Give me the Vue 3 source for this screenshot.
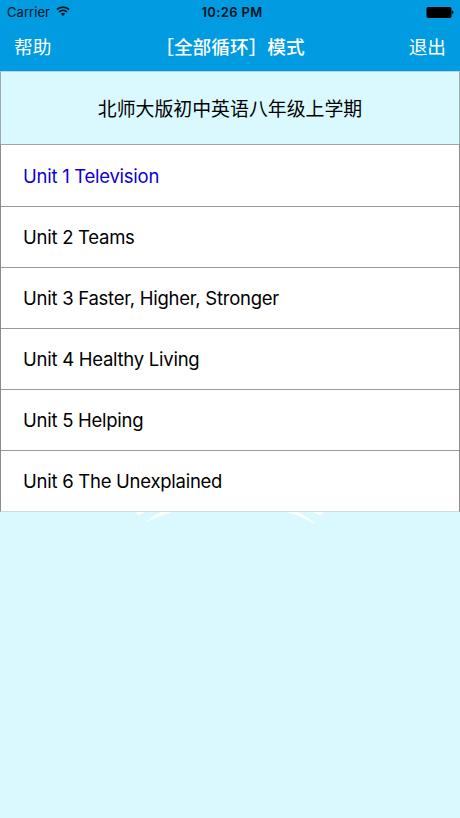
<template>
  <div class="page">
    <!-- 顶部导航 -->
    <header class="top">
      <div class="status">
        <div class="carrier">
          <span>Carrier</span>
          <svg class="wifi" width="14" height="10" viewBox="0 0 14 10">
            <path d="M1 3.5a8.6 8.6 0 0 1 12 0" fill="none" stroke="#00131c" stroke-width="1.8" />
            <path d="M3.2 5.9a5.5 5.5 0 0 1 7.6 0" fill="none" stroke="#00131c" stroke-width="1.7" />
            <path d="M7 10 4.9 7.8a3 3 0 0 1 4.2 0z" fill="#00131c" />
          </svg>
        </div>
        <div class="clock">10:26 PM</div>
        <div class="power">
          <svg width="28" height="11" viewBox="0 0 28 11">
            <rect x="0.5" y="0" width="25" height="11" rx="1.8" fill="#000" />
            <path d="M26.1 3.6c1.7.4 1.7 3.4 0 3.8z" fill="#000" />
          </svg>
        </div>
      </div>
      <nav class="nav">
        <span class="nav-btn">帮助</span>
        <span class="nav-title">［全部循环］模式</span>
        <span class="nav-btn right">退出</span>
      </nav>
    </header>

    <!-- 单元列表 -->
    <div class="book">北师大版初中英语八年级上学期</div>
    <ul class="units">
      <li
        v-for="(unit, i) in units"
        :key="unit"
        class="unit"
        :class="{ active: i === current }"
        @click="current = i"
      >
        <span>{{ unit }}</span>
      </li>
    </ul>

    <!-- 背景花纹 -->
    <div class="backdrop">
      <svg width="190" height="16" viewBox="0 0 190 16">
        <g fill="#fbfffa">
          <path d="M1 0h9L3 3.5z" />
          <path d="M26 0h11Q24 4 11 10.5Q17 4 26 0z" />
          <path d="M152 0h11Q172 4 181 12.5Q166 4 152 0z" />
          <path d="M177 0h11l-1 4z" />
        </g>
      </svg>
    </div>
  </div>
</template>

<script setup>
import { ref } from 'vue'

const units = [
  'Unit 1 Television',
  'Unit 2 Teams',
  'Unit 3 Faster, Higher, Stronger',
  'Unit 4 Healthy Living',
  'Unit 5 Helping',
  'Unit 6 The Unexplained'
]

// 当前选中的单元
const current = ref(0)
</script>

<style>
body { margin: 0; background: #d9f9ff; }
</style>

<style scoped>
* { box-sizing: border-box; }

.page {
  width: 100%; height: 818px; overflow: hidden; background: #d9f9ff; color: #000;
  font-family: Inter, "Noto Sans CJK SC", sans-serif;
}

.top { height: 71px; background: #009be0; }

.status {
  height: 24px; padding: 0 6px 0 7px; display: grid; grid-template-columns: 1fr auto 1fr;
  align-items: center; font-size: 13px; color: #00131c;
}
.carrier { display: flex; align-items: center; gap: 6px; letter-spacing: 0.05px; }
.wifi { margin-top: -2px; }
.clock { font-weight: 600; letter-spacing: 0.35px; padding-left: 3px; }
.power { display: flex; justify-content: flex-end; }

.nav {
  height: 47px; padding: 0 14px; display: grid; grid-template-columns: 1fr auto 1fr;
  align-items: center; color: #fff; font-size: 18.7px; line-height: 28px;
}
.nav-title { font-weight: 500; }
.right { text-align: right; }

.book {
  height: 73px; border: 1px solid #9fabaf; border-top-color: #b5d5df; border-bottom: 0; padding-bottom: 2px;
  display: flex; align-items: center; justify-content: center; font-size: 18.9px;
}

.units { margin: 0; padding: 0; list-style: none; border: 1px solid #8c8c8c; border-top-color: #a3a6aa; border-bottom-color: #ccdcd9; background: #fff; }
.unit {
  height: 61px; padding-left: 22px; display: flex; align-items: center;
  border-bottom: 1px solid #999; font-size: 18.5px; letter-spacing: -0.26px; cursor: pointer;
}
.unit:first-child { height: 62px; padding-top: 1px; }
.unit:last-child { height: 60px; border-bottom: 0; }
.active { color: #0c00d4; }

.backdrop { display: flex; justify-content: center; }
</style>
